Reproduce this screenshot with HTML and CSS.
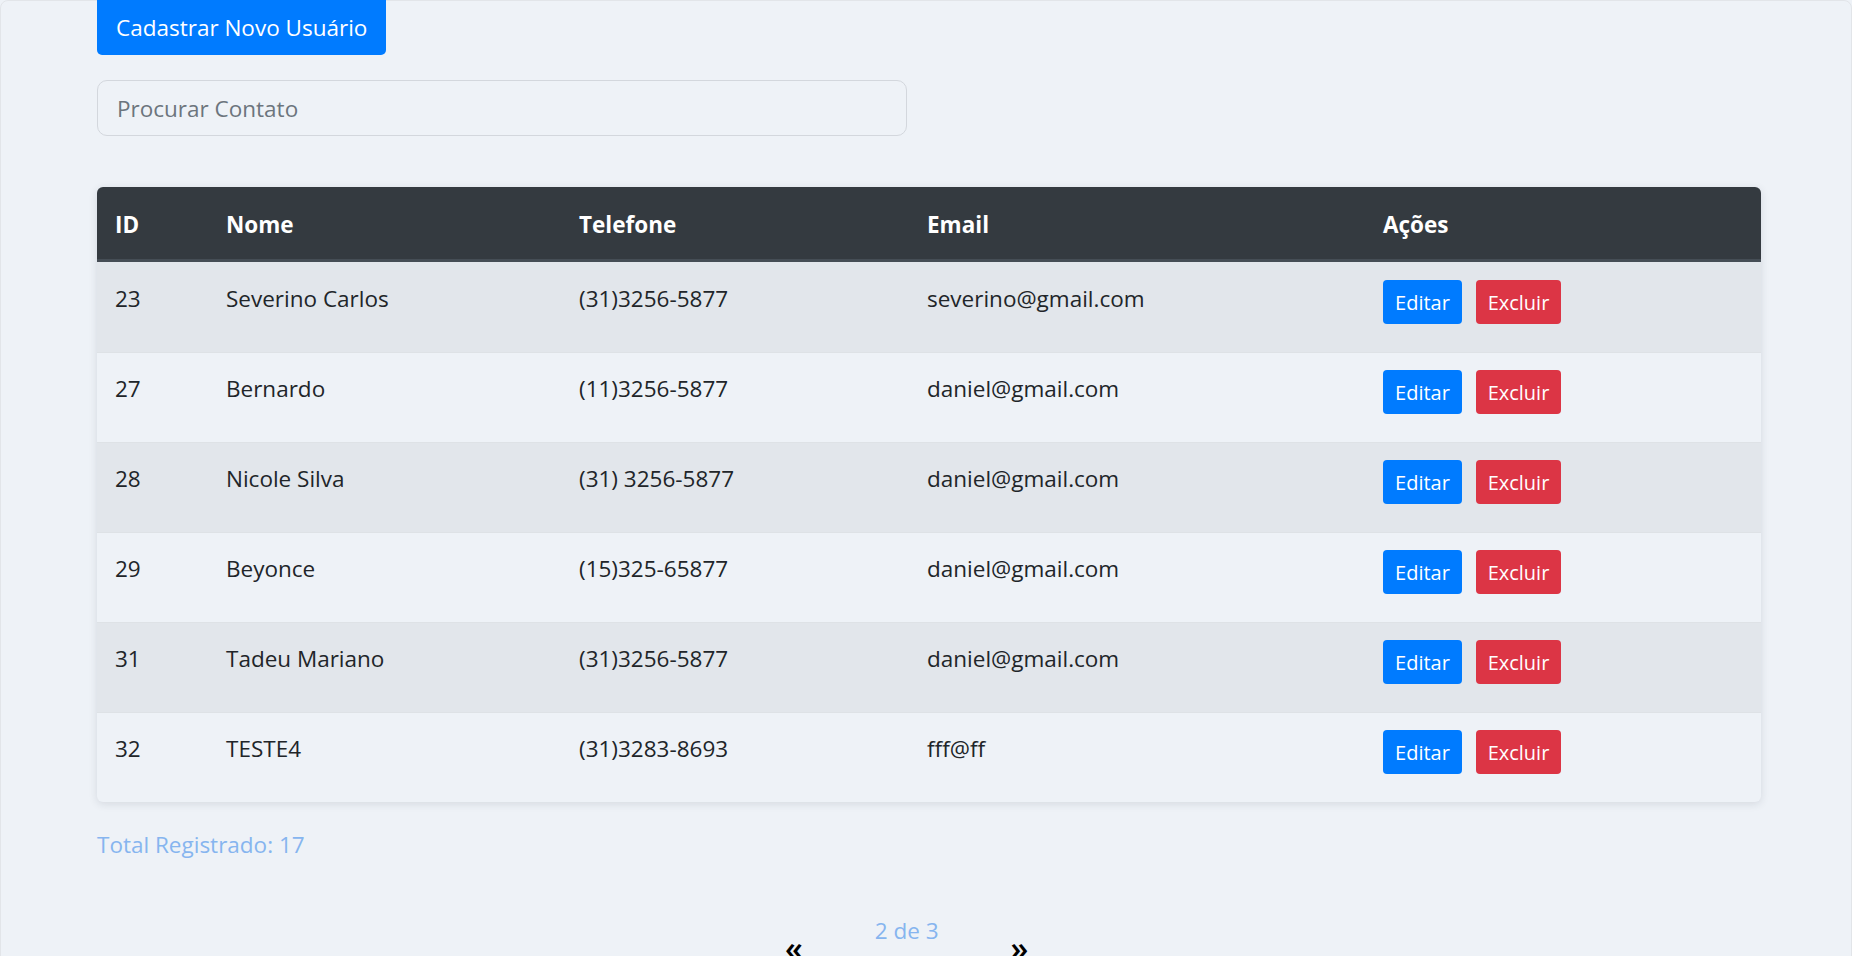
FILE: index.html
```html
<!DOCTYPE html>
<html lang="pt-BR">
<head>
<meta charset="utf-8">
<title>Contatos</title>
<link rel="stylesheet" href="styles.css">
</head>
<body>
<div class="page">
  <button class="btn btn-new">Cadastrar Novo Usuário</button>
  <input class="search" type="text" placeholder="Procurar Contato">
  <div class="table-wrap">
    <table class="grid">
      <colgroup>
        <col class="c-id"><col class="c-nome"><col class="c-tel"><col class="c-email"><col class="c-acoes">
      </colgroup>
      <thead>
        <tr><th>ID</th><th>Nome</th><th>Telefone</th><th>Email</th><th>Ações</th></tr>
      </thead>
      <tbody>
        <tr><td>23</td><td>Severino Carlos</td><td>(31)3256-5877</td><td>severino@gmail.com</td><td class="acts"><button class="btn btn-edit">Editar</button><button class="btn btn-del">Excluir</button></td></tr>
        <tr><td>27</td><td>Bernardo</td><td>(11)3256-5877</td><td>daniel@gmail.com</td><td class="acts"><button class="btn btn-edit">Editar</button><button class="btn btn-del">Excluir</button></td></tr>
        <tr><td>28</td><td>Nicole Silva</td><td>(31) 3256-5877</td><td>daniel@gmail.com</td><td class="acts"><button class="btn btn-edit">Editar</button><button class="btn btn-del">Excluir</button></td></tr>
        <tr><td>29</td><td>Beyonce</td><td>(15)325-65877</td><td>daniel@gmail.com</td><td class="acts"><button class="btn btn-edit">Editar</button><button class="btn btn-del">Excluir</button></td></tr>
        <tr><td>31</td><td>Tadeu Mariano</td><td>(31)3256-5877</td><td>daniel@gmail.com</td><td class="acts"><button class="btn btn-edit">Editar</button><button class="btn btn-del">Excluir</button></td></tr>
        <tr><td>32</td><td>TESTE4</td><td>(31)3283-8693</td><td>fff@ff</td><td class="acts"><button class="btn btn-edit">Editar</button><button class="btn btn-del">Excluir</button></td></tr>
      </tbody>
    </table>
  </div>
  <p class="total">Total Registrado: 17</p>
  <div class="pager">
    <button class="arrow">«</button>
    <span class="page-info">2 de 3</span>
    <button class="arrow">»</button>
  </div>
</div>
</body>
</html>
```
FILE: styles.css
```css
html, body {
  margin: 0;
  padding: 0;
}
body {
  background: #eef2f7;
  color: #212529;
  font-family: "Open Sans", "Noto Sans", sans-serif;
  font-size: 22.5px;
  line-height: 34px;
  overflow: hidden;
}
.page {
  box-sizing: border-box;
  min-height: 980px;
  border: 1px solid #e2e5e9;
  border-radius: 8px;
  padding: 0 90px 0 96px;
}
.btn {
  font-family: inherit;
  border: 0;
  color: #fff;
  cursor: pointer;
}
.btn-new {
  display: block;
  margin-top: -1px;
  height: 55px;
  padding: 0 19px;
  font-size: 22.5px;
  background: #007bff;
  border-radius: 0 0 5px 5px;
}
.search {
  display: block;
  box-sizing: border-box;
  margin-top: 25px;
  width: 810px;
  height: 56px;
  padding: 0 19px;
  font-family: inherit;
  font-size: 22.5px;
  color: #495057;
  background: transparent;
  border: 1px solid #d3d7dd;
  border-radius: 10px;
  outline: none;
}
.search::placeholder {
  color: #6c757d;
}
.table-wrap {
  margin-top: 51px;
  width: 1664px;
  border-radius: 6px;
  overflow: hidden;
  box-shadow: 0 2px 8px rgba(30, 40, 60, 0.12);
}
.grid {
  width: 100%;
  table-layout: fixed;
  border-collapse: separate;
  border-spacing: 0;
}
.c-id { width: 111px; }
.c-nome { width: 353px; }
.c-tel { width: 348px; }
.c-email { width: 456px; }
.c-acoes { width: 396px; }
.grid th {
  height: 75px;
  box-sizing: border-box;
  padding: 4px 18px 0;
  text-align: left;
  vertical-align: middle;
  background: #343a40;
  color: #fff;
  font-weight: 700;
  border-bottom: 3px solid #454d55;
}
.grid td {
  height: 90px;
  box-sizing: border-box;
  padding: 19px 18px 0;
  vertical-align: top;
  border-top: 1px solid #dee2e6;
}
.grid tbody tr:first-child td {
  border-top: 0;
  padding-top: 20px;
}
.grid tbody tr:nth-child(odd) td {
  background: #e2e6eb;
}
.grid td.acts {
  padding-top: 17px;
}
.grid tbody tr:first-child td.acts {
  padding-top: 18px;
}
.btn-edit, .btn-del {
  height: 44px;
  padding: 0;
  font-size: 20px;
  border-radius: 4px;
  vertical-align: top;
}
.btn-edit {
  width: 79px;
  background: #007bff;
}
.btn-del {
  width: 85px;
  margin-left: 14px;
  background: #dc3545;
}
.total {
  margin: 26px 0 0;
  color: #86b5ef;
}
.pager {
  display: flex;
  align-items: flex-start;
  margin: 52px 0 0 686px;
}
.page-info {
  color: #86b5ef;
  margin: 0 70px 0 70px;
}
.arrow {
  margin-top: 17px;
  padding: 0 2px;
  border: 0;
  background: transparent;
  font-family: inherit;
  font-size: 32px;
  font-weight: 600;
  line-height: 34px;
  color: #000;
}
```
